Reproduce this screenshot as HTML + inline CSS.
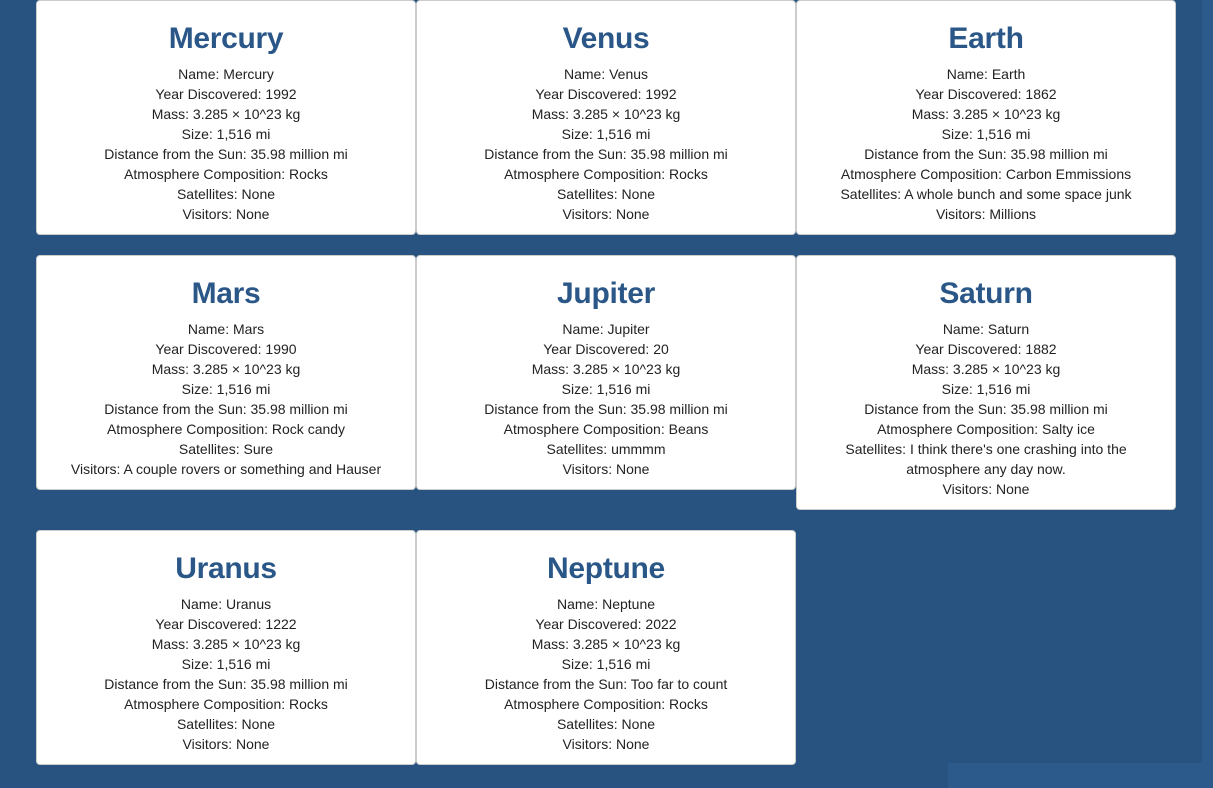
<!DOCTYPE html>
<html><head><meta charset="utf-8"><style>
html,body{margin:0;padding:0;}
body{width:1213px;height:788px;background:#285381;position:relative;overflow:hidden;font-family:"Liberation Sans",Arial,sans-serif;}
.strip{position:absolute;left:1202px;top:0;width:11px;height:788px;background:#2c5a8a;}
.bot{position:absolute;left:948px;top:763px;width:254px;height:25px;background:#2c5a8a;}
.wrap{position:absolute;left:36px;top:0;width:1140px;display:flex;flex-wrap:wrap;align-items:flex-start;row-gap:20px;}
.card{box-sizing:border-box;width:380px;background:#fff;border:1px solid #ccc;border-radius:4px;text-align:center;padding:20px 8px 10px;color:#222;font-size:14px;line-height:20px;}
.card h1{margin:0 0 7px;font-size:30px;line-height:36px;color:#2a5788;font-weight:bold;letter-spacing:-0.3px;}
</style></head><body>
<div class="strip"></div><div class="bot"></div>
<div class="wrap">
<div class="card"><h1>Mercury</h1>Name: Mercury<br>Year Discovered: 1992<br>Mass: 3.285 × 10^23 kg<br>Size: 1,516 mi<br>Distance from the Sun: 35.98 million mi<br>Atmosphere Composition: Rocks<br>Satellites: None<br>Visitors: None</div>
<div class="card"><h1>Venus</h1>Name: Venus<br>Year Discovered: 1992<br>Mass: 3.285 × 10^23 kg<br>Size: 1,516 mi<br>Distance from the Sun: 35.98 million mi<br>Atmosphere Composition: Rocks<br>Satellites: None<br>Visitors: None</div>
<div class="card"><h1>Earth</h1>Name: Earth<br>Year Discovered: 1862<br>Mass: 3.285 × 10^23 kg<br>Size: 1,516 mi<br>Distance from the Sun: 35.98 million mi<br>Atmosphere Composition: Carbon Emmissions<br>Satellites: A whole bunch and some space junk<br>Visitors: Millions</div>
<div class="card"><h1>Mars</h1>Name: Mars<br>Year Discovered: 1990<br>Mass: 3.285 × 10^23 kg<br>Size: 1,516 mi<br>Distance from the Sun: 35.98 million mi<br>Atmosphere Composition: Rock candy<br>Satellites: Sure<br>Visitors: A couple rovers or something and Hauser</div>
<div class="card"><h1>Jupiter</h1>Name: Jupiter<br>Year Discovered: 20<br>Mass: 3.285 × 10^23 kg<br>Size: 1,516 mi<br>Distance from the Sun: 35.98 million mi<br>Atmosphere Composition: Beans<br>Satellites: ummmm<br>Visitors: None</div>
<div class="card"><h1>Saturn</h1>Name: Saturn<br>Year Discovered: 1882<br>Mass: 3.285 × 10^23 kg<br>Size: 1,516 mi<br>Distance from the Sun: 35.98 million mi<br>Atmosphere Composition: Salty ice<br>Satellites: I think there's one crashing into the<br>atmosphere any day now.<br>Visitors: None</div>
<div class="card"><h1>Uranus</h1>Name: Uranus<br>Year Discovered: 1222<br>Mass: 3.285 × 10^23 kg<br>Size: 1,516 mi<br>Distance from the Sun: 35.98 million mi<br>Atmosphere Composition: Rocks<br>Satellites: None<br>Visitors: None</div>
<div class="card"><h1>Neptune</h1>Name: Neptune<br>Year Discovered: 2022<br>Mass: 3.285 × 10^23 kg<br>Size: 1,516 mi<br>Distance from the Sun: Too far to count<br>Atmosphere Composition: Rocks<br>Satellites: None<br>Visitors: None</div>
</div>
</body></html>
